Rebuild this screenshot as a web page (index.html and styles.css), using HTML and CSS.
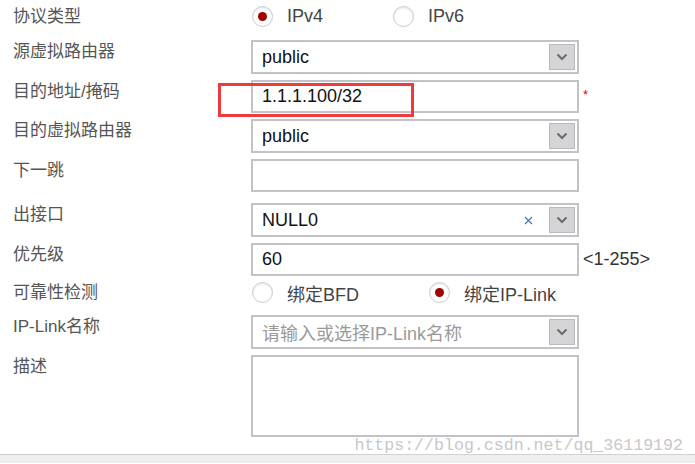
FILE: index.html
```html
<!DOCTYPE html>
<html lang="zh-CN">
<head>
    <meta charset="UTF-8">
    <title>静态路由</title>
    <link rel="stylesheet" href="styles.css">
</head>
<body>
    <div class="form">
        <div class="row row-radio first">
            <span class="label">协议类型</span>
            <div class="radios">
                <span class="radio on"><i></i>IPv4</span>
                <span class="radio"><i></i>IPv6</span>
            </div>
        </div>
        <div class="row">
            <span class="label">源虚拟路由器</span>
            <div class="box select">public<span class="drop"><svg width="12" height="8" viewBox="0 0 12 8"><path d="M1.5 1.5 6 6l4.5-4.5" fill="none" stroke="#6b6b6b" stroke-width="2"/></svg></span></div>
        </div>
        <div class="row">
            <span class="label">目的地址/掩码</span>
            <div class="mark-wrap">
                <div class="box input">1.1.1.100/32</div>
                <div class="mark"></div>
            </div>
            <span class="req">*</span>
        </div>
        <div class="row">
            <span class="label">目的虚拟路由器</span>
            <div class="box select">public<span class="drop"><svg width="12" height="8" viewBox="0 0 12 8"><path d="M1.5 1.5 6 6l4.5-4.5" fill="none" stroke="#6b6b6b" stroke-width="2"/></svg></span></div>
        </div>
        <div class="row gap-lg">
            <span class="label">下一跳</span>
            <div class="box input"></div>
        </div>
        <div class="row">
            <span class="label">出接口</span>
            <div class="box select">NULL0<span class="clear"><svg width="9" height="9" viewBox="0 0 9 9"><path d="M1 1l7 7M8 1 1 8" stroke="#3d72c0" stroke-width="1.1"/></svg></span><span class="drop"><svg width="12" height="8" viewBox="0 0 12 8"><path d="M1.5 1.5 6 6l4.5-4.5" fill="none" stroke="#6b6b6b" stroke-width="2"/></svg></span></div>
        </div>
        <div class="row tight">
            <span class="label">优先级</span>
            <div class="box input">60</div>
            <span class="hint">&lt;1-255&gt;</span>
        </div>
        <div class="row row-radio">
            <span class="label">可靠性检测</span>
            <div class="radios">
                <span class="radio"><i></i>绑定BFD</span>
                <span class="radio on"><i></i>绑定IP-Link</span>
            </div>
        </div>
        <div class="row">
            <span class="label">IP-Link名称</span>
            <div class="box select placeholder">请输入或选择IP-Link名称<span class="drop"><svg width="12" height="8" viewBox="0 0 12 8"><path d="M1.5 1.5 6 6l4.5-4.5" fill="none" stroke="#6b6b6b" stroke-width="2"/></svg></span></div>
        </div>
        <div class="row last">
            <span class="label">描述</span>
            <div class="box area"></div>
        </div>
    </div>
    <div class="watermark">https://blog.csdn.net/qq_36119192</div>
    <div class="hbar"></div>
</body>
</html>
```

FILE: styles.css
```css
*{
    margin: 0;
    padding: 0;
    box-sizing: border-box;
}
body{
    width: 695px;
    height: 464px;
    overflow: hidden;
    background: #fff;
    font-family: "Liberation Sans", "Noto Sans CJK SC", sans-serif;
    color: #444;
}
.form{
    padding-left: 13px;
}
.row{
    display: flex;
    align-items: flex-start;
    margin-bottom: 6px;
}
.row.first{
    margin-bottom: 7px;
}
.row.gap-lg{
    margin-bottom: 11px;
}
.row.tight{
    margin-bottom: 0;
}
.row.last{
    margin-bottom: 0;
}
.label{
    width: 238px;
    flex-shrink: 0;
    font-size: 17px;
    line-height: 24px;
    color: #555;
}
.row-radio{
    height: 33px;
    align-items: center;
}
.radios{
    display: flex;
    align-items: center;
}
.radio{
    display: flex;
    align-items: center;
    margin-right: 69px;
    font-size: 18px;
    color: #444;
}
.radio i{
    position: relative;
    width: 21px;
    height: 21px;
    margin-left: 1px;
    margin-right: 14px;
    border: 1px solid #cbcbcb;
    border-radius: 50%;
    background: #fff;
    box-shadow: inset 0 1px 2px rgba(0,0,0,.12);
}
.radio.on i::after{
    content: "";
    position: absolute;
    left: 50%;
    top: 50%;
    width: 9px;
    height: 9px;
    margin: -4.5px 0 0 -4.5px;
    border-radius: 50%;
    background: #a30000;
}
.box{
    display: flex;
    align-items: center;
    width: 328px;
    height: 33px;
    padding-left: 9px;
    border: 2px solid #c3c3c7;
    background: #fff;
    font-size: 18px;
    color: #111;
}
.select{
    height: 34px;
}
.placeholder{
    color: #9a9a9a;
}
.area{
    height: 82px;
}
.drop{
    display: flex;
    align-items: center;
    justify-content: center;
    width: 26px;
    height: 26px;
    margin-left: auto;
    margin-right: 2px;
    border: 1px solid #b9b9bd;
    background: #d5d5d8;
}
.clear{
    display: flex;
    margin-left: auto;
    margin-right: 16px;
}
.clear + .drop{
    margin-left: 0;
}
.mark-wrap{
    position: relative;
}
.mark{
    position: absolute;
    left: -33px;
    top: 3px;
    width: 196px;
    height: 34px;
    border: 3px solid #ef3b3b;
}
.req{
    margin: 8px 0 0 4px;
    font-size: 13px;
    line-height: 13px;
    color: #e00;
}
.hint{
    align-self: center;
    margin-left: 4px;
    font-size: 18px;
    color: #333;
}
.watermark{
    height: 17px;
    padding-right: 12px;
    text-align: right;
    font: 16.6px/17px "Liberation Mono", monospace;
    color: #c8c8c8;
}
.hbar{
    height: 9px;
    border-top: 1px solid #d2d2d2;
    background: #eee;
}
```
